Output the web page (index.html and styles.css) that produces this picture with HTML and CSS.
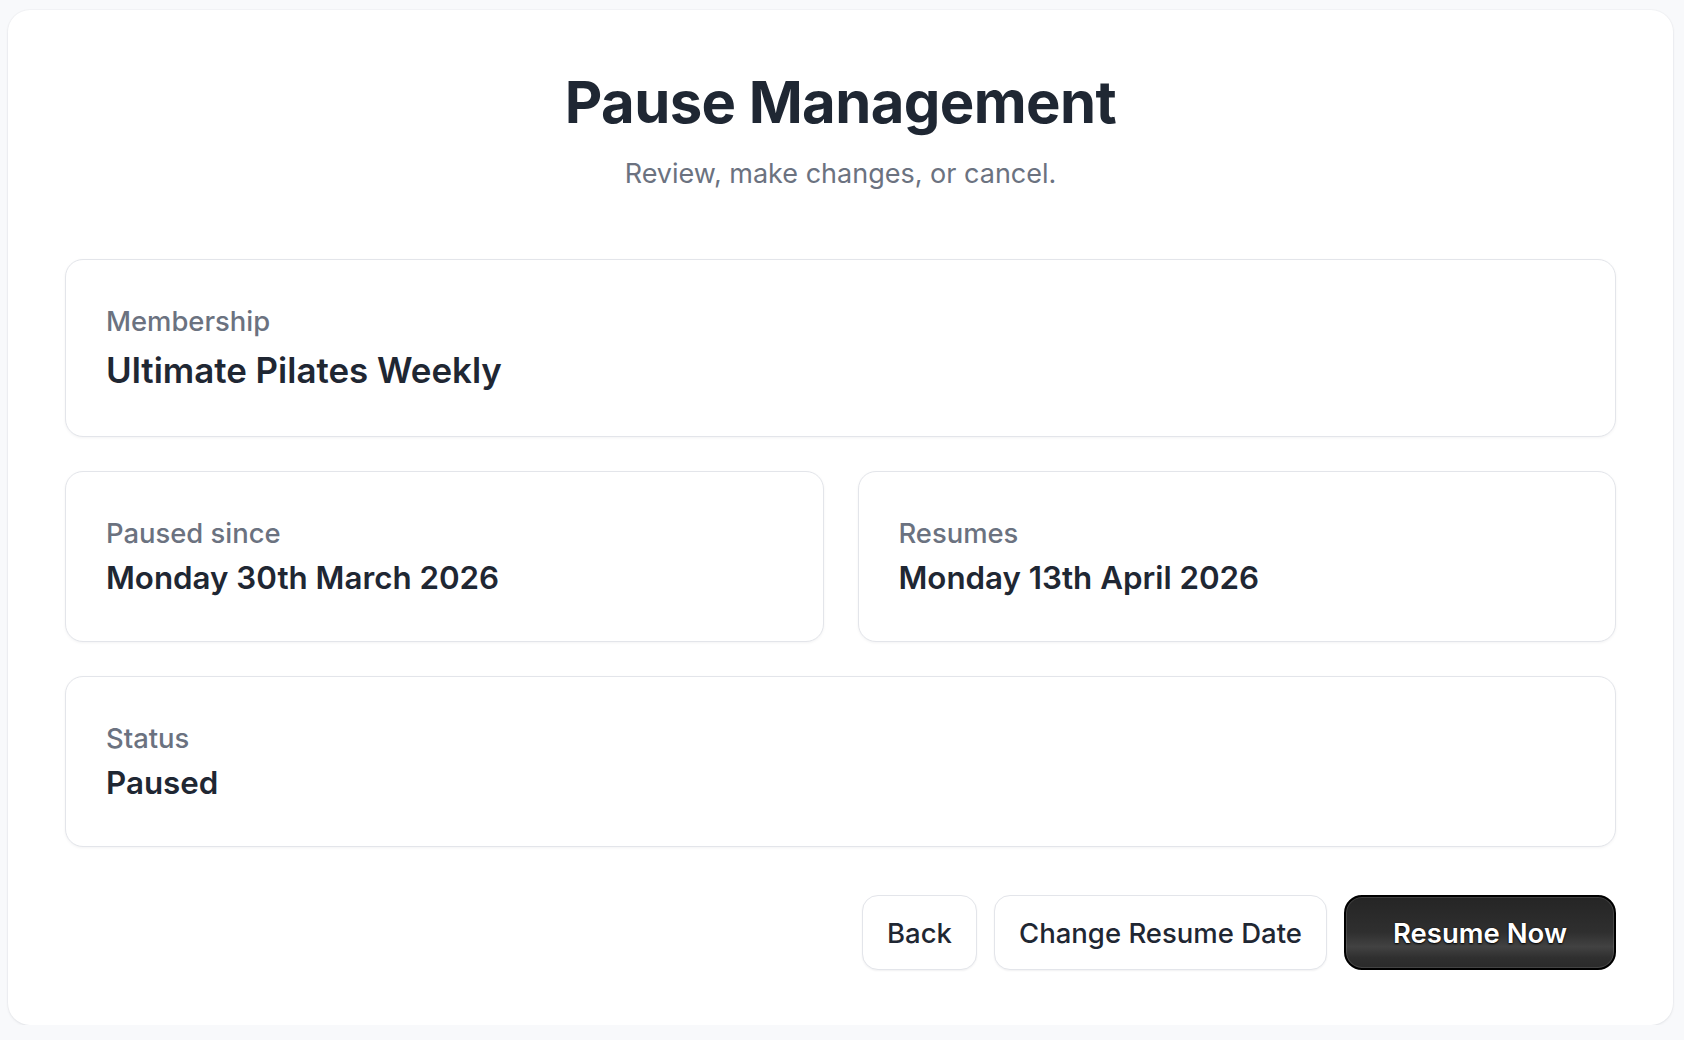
FILE: index.html
```html
<!DOCTYPE html>
<html lang="en">
<head>
<meta charset="utf-8">
<title>Pause Management</title>
<link rel="stylesheet" href="styles.css">
</head>
<body>
<main class="panel">
  <header class="panel-head">
    <h1 class="title">Pause Management</h1>
    <p class="subtitle">Review, make changes, or cancel.</p>
  </header>

  <section class="details">
    <div class="info-card info-card--wide info-card--lead">
      <div class="info-label">Membership</div>
      <div class="info-value">Ultimate Pilates Weekly</div>
    </div>
    <div class="info-card">
      <div class="info-label">Paused since</div>
      <div class="info-value">Monday 30th March 2026</div>
    </div>
    <div class="info-card">
      <div class="info-label">Resumes</div>
      <div class="info-value">Monday 13th April 2026</div>
    </div>
    <div class="info-card info-card--wide">
      <div class="info-label">Status</div>
      <div class="info-value">Paused</div>
    </div>
  </section>

  <div class="actions">
    <button class="btn btn--ghost" type="button">Back</button>
    <button class="btn btn--ghost" type="button">Change Resume Date</button>
    <button class="btn btn--primary" type="button">Resume Now</button>
  </div>
</main>
</body>
</html>
```

FILE: styles.css
```css
* {
  box-sizing: border-box;
}

html,
body {
  margin: 0;
  background: #f8f9fb;
}

body {
  font-family: Inter, "Noto Sans", "Liberation Sans", sans-serif;
  color: #1f2733;
  padding: 10px 11px 0 8px;
}

.panel {
  background: #ffffff;
  border-radius: 22px;
  box-shadow: 0 1px 3px rgba(15, 23, 42, 0.08), 0 0 0 1px rgba(15, 23, 42, 0.02);
  padding: 57px 57px 55px 57px;
}

.panel-head {
  text-align: center;
  margin-bottom: 66px;
}

.title {
  margin: 0;
  font-size: 58px;
  line-height: 70px;
  font-weight: 700;
  letter-spacing: -0.6px;
  color: #1f2733;
}

.subtitle {
  margin: 17px 0 0;
  font-size: 27px;
  line-height: 39px;
  color: #6b7280;
}

.details {
  display: grid;
  grid-template-columns: 1fr 1fr;
  gap: 34px 34px;
}

.info-card {
  border: 1px solid #e3e5ea;
  border-radius: 18px;
  padding: 42px 40px 41px;
  box-shadow: 0 1px 3px rgba(15, 23, 42, 0.05);
  background: #fff;
}

.info-card--wide {
  grid-column: 1 / -1;
}

.info-label {
  font-size: 27.4px;
  line-height: 39px;
  color: #6b7280;
  font-weight: 500;
}

.info-value {
  margin-top: 4px;
  font-size: 31.3px;
  line-height: 43px;
  font-weight: 600;
  color: #1f2733;
}

.info-card--lead {
  padding-top: 42px;
  padding-bottom: 43px;
}

.info-card--lead .info-value {
  margin-top: 7px;
  font-size: 34.9px;
  line-height: 45px;
}

.actions {
  display: flex;
  justify-content: flex-end;
  gap: 17px;
  margin-top: 48px;
}

.btn {
  font-family: inherit;
  font-size: 27.5px;
  font-weight: 500;
  height: 75px;
  border-radius: 16px;
  cursor: pointer;
}

.btn--ghost {
  background: #fff;
  color: #1f2733;
  border: 1px solid #e3e5ea;
  padding: 0 24px;
  box-shadow: 0 1px 2px rgba(15, 23, 42, 0.06);
}

.btn--primary {
  color: #fff;
  font-weight: 600;
  border: 2px solid #000;
  border-radius: 18px;
  padding: 0 47px;
  background: linear-gradient(180deg, #252525 0%, #2f2f2f 50%, #424242 70%, #303030 85%, #2a2a2a 100%);
  box-shadow: inset 0 0 0 1px rgba(255, 255, 255, 0.12);
  text-shadow: 0 1px 2px #000, 0 0 1px #000;
}
```
